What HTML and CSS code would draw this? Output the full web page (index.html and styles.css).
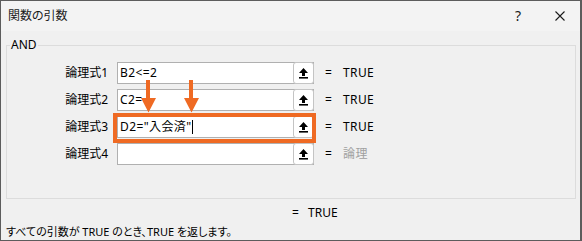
FILE: index.html
```html
<!DOCTYPE html>
<html>
<head>
  <meta charset="utf-8">
  <title>関数の引数</title>
  <link rel="stylesheet" href="styles.css">
</head>
<body>
  <div class="dialog">
    <div class="titlebar">
      <span class="title">関数の引数</span>
      <span class="help">?</span>
      <span class="close">
        <svg width="10" height="10" viewBox="0 0 10 10"><path d="M0.5 0.5 L9.5 9.5 M9.5 0.5 L0.5 9.5" stroke="#1a1a1a" stroke-width="1.1" fill="none"/></svg>
      </span>
    </div>

    <fieldset class="args">
      <legend>AND</legend>
      <div class="arg-grid">
        <label>論理式1</label>
        <div class="ref-input"><span class="value">B2&lt;=2</span><button class="collapse"><svg width="9" height="11" viewBox="0 0 9 11"><path d="M4.5 0 L9 5 L6 5 L6 8 L3 8 L3 5 L0 5 Z" fill="#000"/><rect x="0" y="9" width="9" height="1.6" fill="#000"/></svg></button></div>
        <span class="eq">=</span><span class="result">TRUE</span>

        <label>論理式2</label>
        <div class="ref-input"><span class="value">C2=</span><button class="collapse"><svg width="9" height="11" viewBox="0 0 9 11"><path d="M4.5 0 L9 5 L6 5 L6 8 L3 8 L3 5 L0 5 Z" fill="#000"/><rect x="0" y="9" width="9" height="1.6" fill="#000"/></svg></button></div>
        <span class="eq">=</span><span class="result">TRUE</span>

        <label>論理式3</label>
        <div class="ref-input"><span class="value">D2="入会済"<i class="caret"></i></span><button class="collapse"><svg width="9" height="11" viewBox="0 0 9 11"><path d="M4.5 0 L9 5 L6 5 L6 8 L3 8 L3 5 L0 5 Z" fill="#000"/><rect x="0" y="9" width="9" height="1.6" fill="#000"/></svg></button></div>
        <span class="eq">=</span><span class="result">TRUE</span>

        <label>論理式4</label>
        <div class="ref-input"><span class="value"></span><button class="collapse"><svg width="9" height="11" viewBox="0 0 9 11"><path d="M4.5 0 L9 5 L6 5 L6 8 L3 8 L3 5 L0 5 Z" fill="#000"/><rect x="0" y="9" width="9" height="1.6" fill="#000"/></svg></button></div>
        <span class="eq">=</span><span class="result muted">論理</span>
      </div>
    </fieldset>

    <div class="formula-result"><span class="eq">=</span><span>TRUE</span></div>
    <p class="desc">すべての引数が TRUE のとき、TRUE を返します。</p>

    <!-- annotation overlay -->
    <div class="highlight"></div>
    <svg class="arrow arrow-1" width="15" height="33" viewBox="0 0 15 33"><path d="M5 0 L9 0 L9 18 L15 18 L7.5 32.5 L0 18 L5 18 Z" fill="#ef6a23"/></svg>
    <svg class="arrow arrow-2" width="15" height="33" viewBox="0 0 15 33"><path d="M5 0 L9 0 L9 18 L15 18 L7.5 32.5 L0 18 L5 18 Z" fill="#ef6a23"/></svg>
  </div>
</body>
</html>
```

FILE: styles.css
```css
* {
  box-sizing: border-box;
}

body {
  margin: 0;
  font-family: "Noto Sans", "Noto Sans CJK JP", sans-serif;
  font-size: 12px;
  line-height: 16px;
  color: #000;
  background: #f0f0f0;
}

.dialog {
  position: relative;
  width: 582px;
  height: 241px;
  overflow: hidden;
  background: #f0f0f0;
  border: 1px solid #5c5c5c;
  border-right-width: 2px;
}

.titlebar {
  display: flex;
  align-items: center;
  height: 30px;
  padding-left: 7px;
  background: #f3f3f3;
  color: #1a1a1a;
}

.title {
  flex: 1;
  font-feature-settings: "palt";
}

.help {
  width: 40px;
  font-size: 14px;
}

.close {
  display: flex;
  width: 25px;
}

/* argument box */
.args {
  margin: 6px 4px 0 5px;
  padding: 9px 0 33px 0;
  border: 1px solid #dcdcdc;
}

.args legend {
  margin-left: 3px;
  padding: 0 1px;
  line-height: 16px;
}

.arg-grid {
  display: grid;
  grid-template-columns: 110px 197px 29px auto;
  grid-auto-rows: 22px;
  row-gap: 5px;
  align-items: center;
}

.arg-grid label {
  padding-right: 9px;
  text-align: right;
}

.result {
  letter-spacing: 0.4px;
}

.ref-input {
  display: flex;
  align-items: center;
  height: 22px;
  background: #fff;
  border: 1px solid #b0b0b0;
}

.ref-input .value {
  flex: 1;
  padding-left: 2px;
  white-space: nowrap;
  letter-spacing: 0.4px;
}

.caret {
  display: inline-block;
  width: 1px;
  height: 14px;
  margin-left: 1px;
  vertical-align: -3px;
  background: #000;
}

.collapse {
  display: flex;
  align-items: center;
  justify-content: center;
  width: 21px;
  height: 22px;
  margin: -1px -1px -1px 0;
  padding: 0;
  background: #fff;
  border: 1px solid #c4c4c4;
  border-radius: 3px;
}

.eq {
  padding-left: 11px;
}

.muted {
  color: #a0a0a0;
}

.formula-result {
  display: flex;
  margin-top: 6px;
  padding-left: 291px;
}

.formula-result .eq {
  width: 16px;
  padding-left: 0;
}

.desc {
  margin: 3px 0 0;
  padding-left: 5px;
  font-size: 11px;
  font-feature-settings: "palt";
}

/* orange annotation on top of the dialog */
.highlight {
  position: absolute;
  left: 112px;
  top: 112px;
  width: 203px;
  height: 30px;
  border: 4px solid #ef6a23;
}

.arrow {
  position: absolute;
  top: 79px;
}

.arrow-1 {
  left: 140px;
}

.arrow-2 {
  left: 183px;
}
```
